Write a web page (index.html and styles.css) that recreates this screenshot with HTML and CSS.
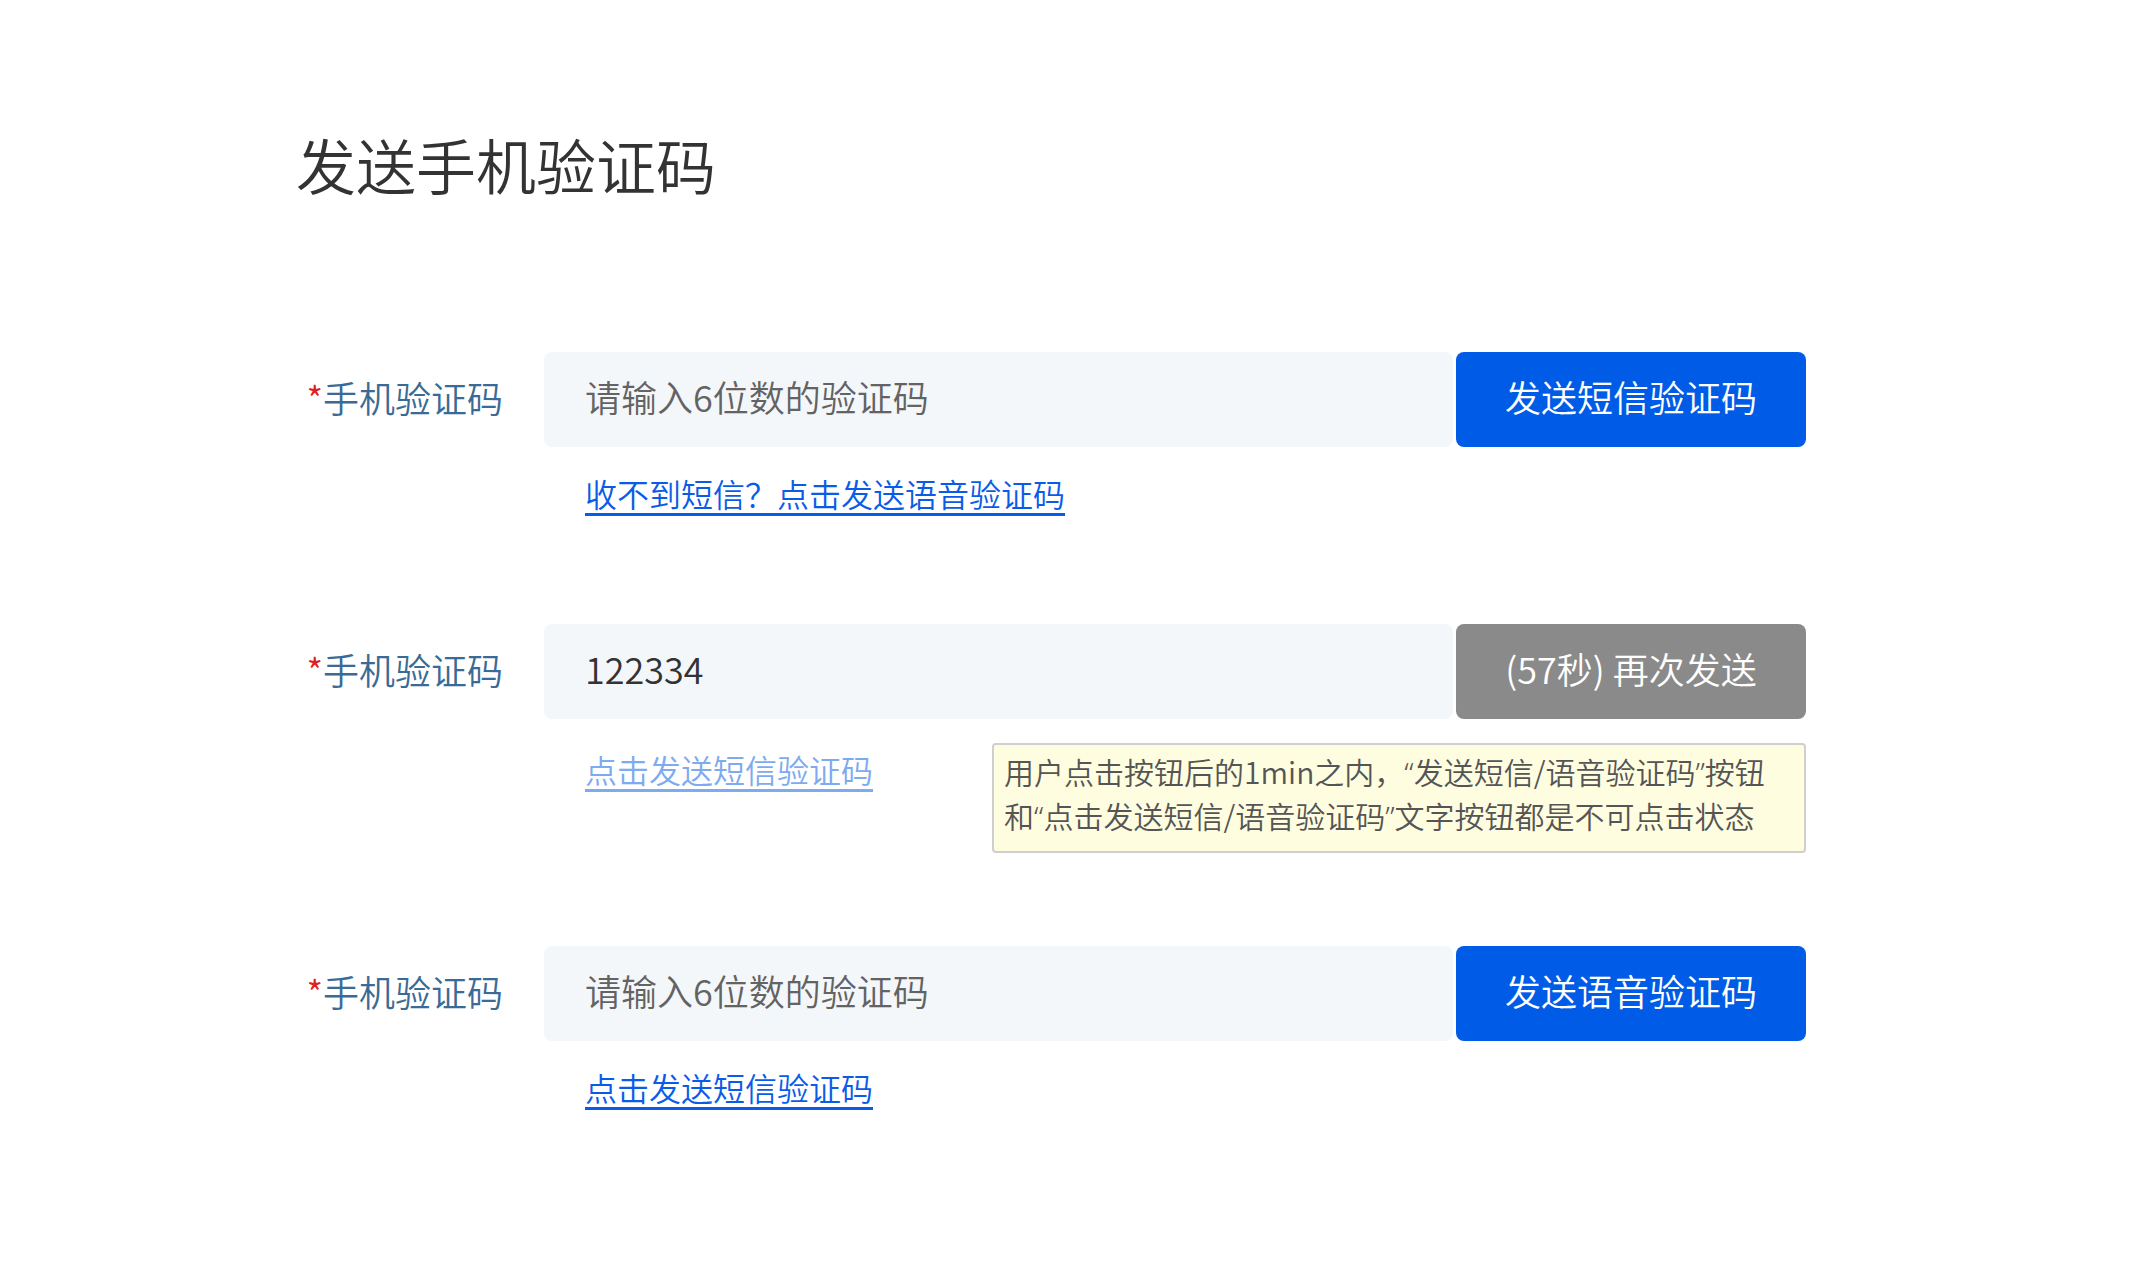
FILE: index.html
```html
<!DOCTYPE html>
<html lang="zh-CN">
<head>
    <meta charset="UTF-8">
    <meta name="viewport" content="width=device-width, initial-scale=1.0">
    <title>发送手机验证码</title>
    <link rel="stylesheet" href="styles.css">
</head>
<body>
    <div class="page">
        <h1 class="title">发送手机验证码</h1>

        <div class="group">
            <div class="field">
                <label class="label"><span class="required">*</span>手机验证码</label>
                <div class="control">
                    <input type="text" class="code-input" placeholder="请输入6位数的验证码">
                    <button class="send-btn">发送短信验证码</button>
                </div>
            </div>
            <div class="help">
                <a href="#" class="link">收不到短信？点击发送语音验证码</a>
            </div>
        </div>

        <div class="group group-note">
            <div class="field">
                <label class="label"><span class="required">*</span>手机验证码</label>
                <div class="control">
                    <input type="text" class="code-input" value="122334">
                    <button class="send-btn disabled">(57秒) 再次发送</button>
                </div>
            </div>
            <div class="help">
                <a href="#" class="link link-disabled">点击发送短信验证码</a>
                <div class="note">用户点击按钮后的1min之内，<span class="q">“</span>发送短信/语音验证码<span class="q">”</span>按钮<br>和<span class="q">“</span>点击发送短信/语音验证码<span class="q">”</span>文字按钮都是不可点击状态</div>
            </div>
        </div>

        <div class="group">
            <div class="field">
                <label class="label"><span class="required">*</span>手机验证码</label>
                <div class="control">
                    <input type="text" class="code-input" placeholder="请输入6位数的验证码">
                    <button class="send-btn">发送语音验证码</button>
                </div>
            </div>
            <div class="help">
                <a href="#" class="link">点击发送短信验证码</a>
            </div>
        </div>
    </div>
</body>
</html>
```

FILE: styles.css
```css
:root {
    --primary-color: #005ce6;
    --title-color: #333;
    --label-color: #3a6b96;
    --input-bg: #f4f7fa;
}
body {
    font-family: "Noto Sans CJK SC", "Noto Sans", sans-serif;
    font-weight: 350;
    margin: 0;
    background-color: #fff;
    color: var(--title-color);
}
.page {
    padding: 122px 0 0 296px;
}
.title {
    font-size: 60px;
    font-weight: 350;
    line-height: 84px;
    margin: 0 0 146px;
    color: var(--title-color);
}
.group {
    margin-bottom: 109px;
}
.group-note {
    margin-bottom: 93px;
}
.field {
    display: flex;
    align-items: center;
}
.label {
    width: 248px;
    box-sizing: border-box;
    padding: 0 41px 5px 0;
    text-align: right;
    font-size: 36px;
    color: var(--label-color);
}
.required {
    color: #e0201c;
}
.control {
    display: flex;
    gap: 3px;
    height: 95px;
}
.code-input {
    width: 909px;
    box-sizing: border-box;
    padding: 0 41px 7px;
    border: none;
    border-radius: 8px;
    background-color: var(--input-bg);
    font-family: inherit;
    font-weight: inherit;
    font-size: 36px;
    color: #333;
    outline: none;
}
.code-input::placeholder {
    color: #636363;
}
.send-btn {
    width: 350px;
    padding: 0 0 7px;
    border: none;
    border-radius: 8px;
    background-color: var(--primary-color);
    color: #fff;
    font-family: inherit;
    font-weight: inherit;
    font-size: 36px;
    cursor: pointer;
}
.send-btn.disabled {
    background-color: #8a8a8a;
    cursor: default;
}
.help {
    display: flex;
    align-items: flex-start;
    margin: 24px 0 0 289px;
}
.link {
    font-size: 32px;
    line-height: 44px;
    color: #0a5ce8;
    text-decoration: underline;
    text-underline-offset: 6px;
}
.link-disabled {
    color: #7eaaf0;
    margin-top: 4px;
    pointer-events: none;
}
.note {
    margin-left: 119px;
    width: 814px;
    height: 110px;
    box-sizing: border-box;
    padding: 5px 10px 0;
    border: 2px solid #cfcfcf;
    border-radius: 4px;
    background-color: #fffde0;
    font-size: 30px;
    line-height: 42px;
    color: #555;
}
.q {
    font-family: "Noto Sans", sans-serif;
}
```
